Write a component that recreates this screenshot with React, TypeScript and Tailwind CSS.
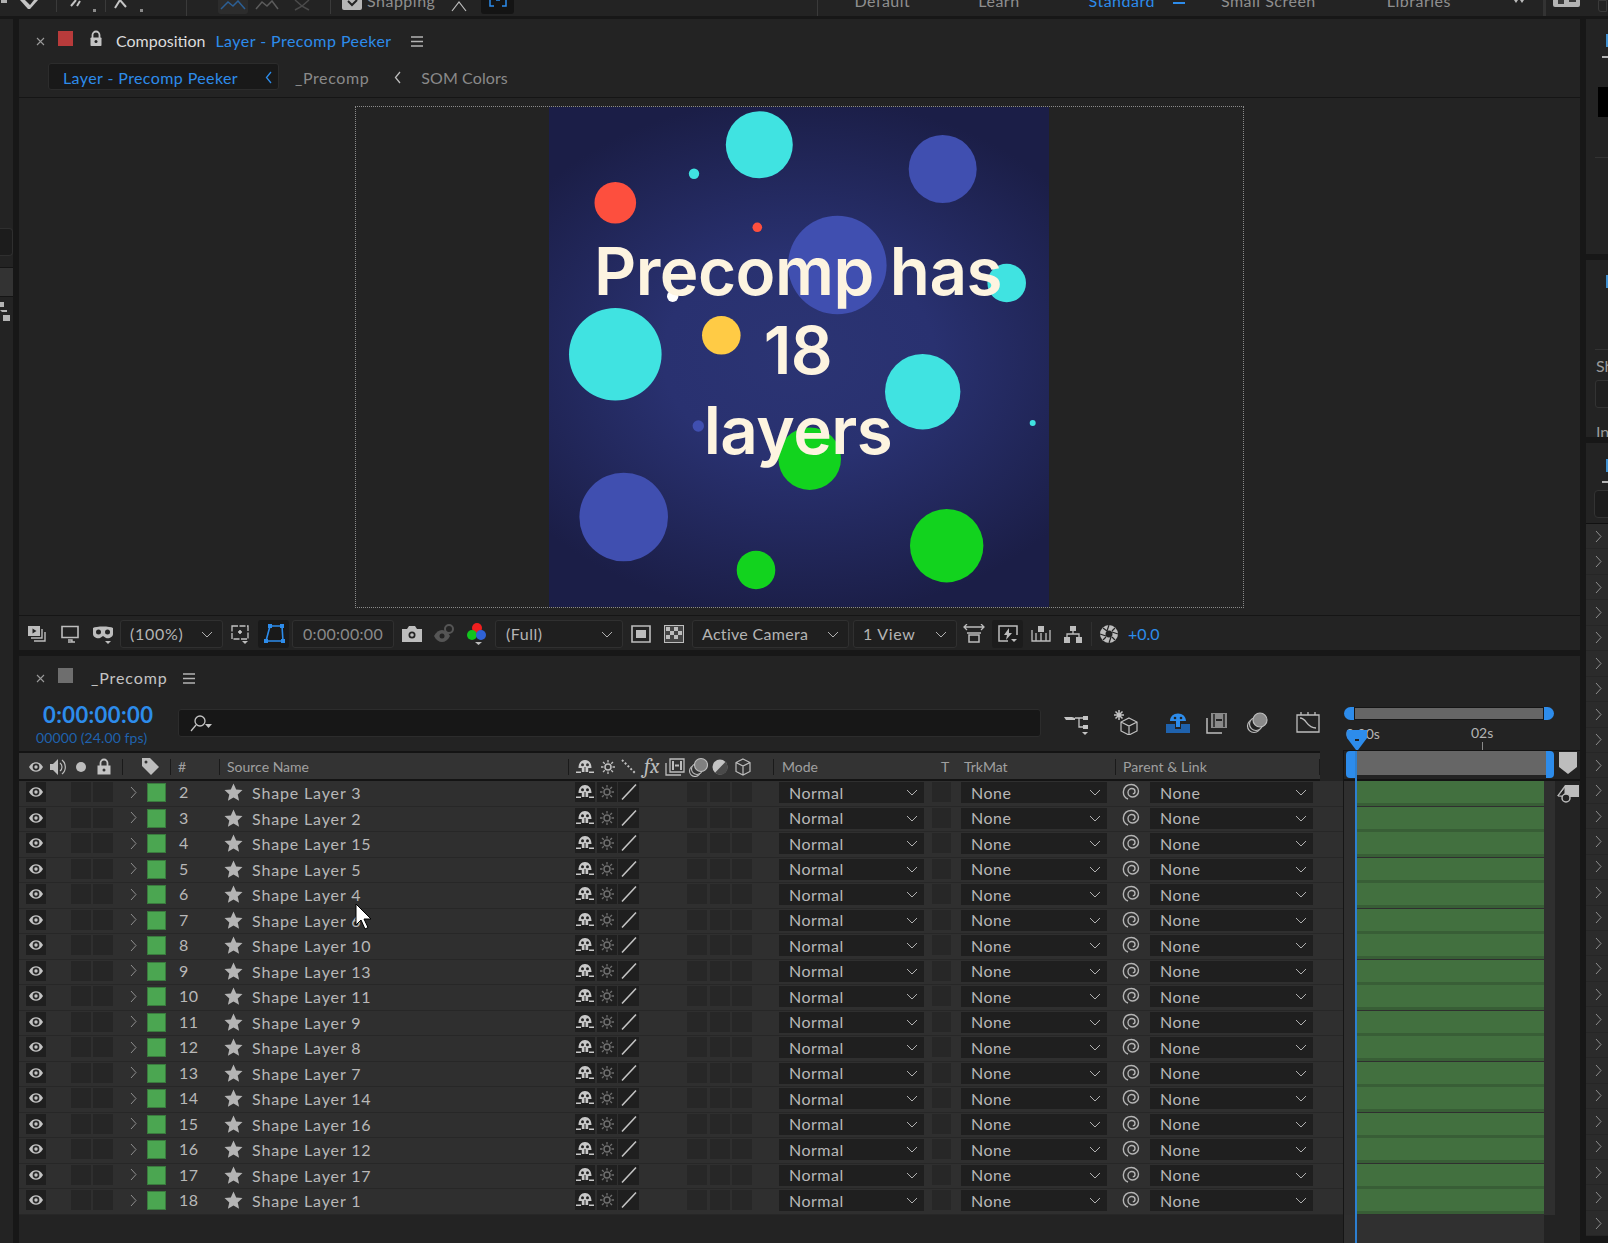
import React from "react";

const BLUE = "#2d8ceb";
const G = "#b4b4b4";

function S({ w, h, children, className = "" }: { w: number; h: number; children: React.ReactNode; className?: string }) {
  return (
    <svg width={w} height={h} viewBox={`0 0 ${w} ${h}`} className={"block shrink-0 " + className} fill="none">
      {children}
    </svg>
  );
}

function Eye({ c = "#c4c4c4" }: { c?: string }) {
  return (
    <S w={16} h={12}>
      <path d="M1 6C3 2.5 5.5 1.2 8 1.2S13 2.5 15 6c-2 3.5-4.500 4.800-7 4.800S3 9.500 1 6Z" fill={c} />
      <circle cx={8} cy={6} r={3.4} fill="#2a2a2a" />
      <circle cx={8} cy={6} r={1.7} fill={c} />
    </S>
  );
}
function Shy({ c = "#c8c8c8", bg = "#1f1f1f" }: { c?: string; bg?: string }) {
  return (
    <S w={18} h={16}>
      <path d="M2.500 9C2.500 4 5.200 1 9 1s6.500 3 6.500 8h-3.300v4H5.800V9Z" fill={c} />
      <circle cx={6.500} cy={5.800} r={1.500} fill={bg} />
      <circle cx={11.500} cy={5.800} r={1.500} fill={bg} />
      <rect x={8.500} y={8} width={1} height={5} fill={bg} />
      <rect x={0} y={12.500} width={5} height={1.500} fill={c} />
      <rect x={13} y={12.500} width={5} height={1.500} fill={c} />
    </S>
  );
}
function Sun({ c = "#6f6f6f" }: { c?: string }) {
  return (
    <S w={14} h={14}>
      <circle cx={7} cy={7} r={3} stroke={c} strokeWidth={1.500} />
      <path d="M7 0v2.500M7 11.500V14M0 7h2.500M11.500 7H14M2 2l1.800 1.800M10.200 10.200 12 12M12 2l-1.800 1.800M3.800 10.200 2 12" stroke={c} strokeWidth={1.300} />
    </S>
  );
}
function Chev({ c = "#b0b0b0" }: { c?: string }) {
  return (
    <S w={12} h={7}>
      <path d="M1 1l5 5 5-5" stroke={c} strokeWidth={1} />
    </S>
  );
}
function ChevR({ c = "#8e8e8e", h = 13 }: { c?: string; h?: number }) {
  return (
    <S w={7} h={h}>
      <path d={`M1 1l5 ${(h - 2) / 2}-5 ${(h - 2) / 2}`} stroke={c} strokeWidth={1} />
    </S>
  );
}
function ChevL({ c }: { c: string }) {
  return (
    <S w={7} h={13}>
      <path d="M6 1 1.500 6.500 6 12" stroke={c} strokeWidth={1.300} />
    </S>
  );
}
function Spiral() {
  return (
    <S w={18} h={18}>
      <path d="M6 16C2.500 14.500 1 11.500 1.500 8 2.200 4 5.500 1.500 9.500 1.500c3.800 0 7 3 7 6.500 0 3.500-2.700 6-5.700 6-2.600 0-4.800-2-4.800-4.500 0-2.300 1.800-4 3.800-4 1.800 0 3.200 1.300 3.200 3 0 1.400-1 2.300-2.200 2.300" stroke="#b4b4b4" strokeWidth={1.400} />
    </S>
  );
}
function Star() {
  return (
    <S w={19} h={18}>
      <path d="M9.500 0.500l2.700 6 6.300.6-4.800 4.300 1.400 6.300-5.600-3.300-5.600 3.300 1.400-6.300L.5 7.100l6.300-.6Z" fill={G} />
    </S>
  );
}
function Burger({ c = "#b4b4b4" }: { c?: string }) {
  return (
    <S w={12} h={11}>
      <path d="M0 1h12M0 5.500h12M0 10h12" stroke={c} strokeWidth={1.300} />
    </S>
  );
}
function X() {
  return (
    <S w={9} h={9}>
      <path d="M1 1l7 7M8 1L1 8" stroke="#9a9a9a" strokeWidth={1.100} />
    </S>
  );
}
function Lock() {
  return (
    <S w={14} h={17}>
      <path d="M3.500 8V5a3.500 3.500 0 0 1 7 0v3" stroke="#c4c4c4" strokeWidth={1.800} />
      <rect x={1.500} y={7.500} width={11} height={8.500} rx={0.800} fill="#c4c4c4" />
      <circle cx={7} cy={11.500} r={1.500} fill="#232323" />
    </S>
  );
}

function Select({ label, cls, textCls = "" }: { label: string; cls: string; textCls?: string }) {
  return (
    <div className={"flex h-[28px] items-center justify-between rounded-[3px] border border-[#303030] bg-[#1f1f1f] pl-[9px] pr-[9px] " + cls}>
      <span className={"text-[16px] tracking-[0.3px] text-[#b4b4b4] " + textCls}>{label}</span>
      <Chev />
    </div>
  );
}

function TabText({ c, children, cls = "" }: { c: string; children: React.ReactNode; cls?: string }) {
  return (
    <span className={"whitespace-nowrap text-[16px] " + cls} style={{ color: c }}>
      {children}
    </span>
  );
}

const circles: [number, number, number, string][] = [
  [210.3, 37.7, 33.5, "#40e3e1"],
  [393.7, 62, 34, "#404fb0"],
  [145, 66.7, 5.2, "#40e3e1"],
  [66.3, 95.7, 20.8, "#fd4f3e"],
  [208.3, 120.3, 4.8, "#fd4f3e"],
  [288.3, 158, 49.3, "#404fb0"],
  [457.7, 176, 19.3, "#40e3e1"],
  [123.7, 189.3, 5.7, "#ffffff"],
  [66.3, 247.3, 46.3, "#40e3e1"],
  [172.3, 228.3, 19.3, "#ffcb45"],
  [373.7, 284.7, 37.7, "#40e3e1"],
  [149.3, 319, 5.7, "#404fb0"],
  [483.7, 316, 3, "#40e3e1"],
  [260.7, 351.7, 31.3, "#12d31e"],
  [74.7, 410, 44.3, "#404fb0"],
  [397.7, 438.7, 36.7, "#12d31e"],
  [207, 463, 19.3, "#12d31e"],
];

function Artwork() {
  return (
    <div className="relative h-[500px] w-[500px] bg-[radial-gradient(340px_260px_at_center,#2b3473_0%,#293170_40%,#1b1e47_100%)]">
      <svg width={500} height={500} viewBox="0 0 500 500" className="absolute inset-0">
        {circles.map(([x, y, r, c], i) => (
          <circle key={i} cx={x} cy={y} r={r} fill={c} />
        ))}
      </svg>
      <div className="absolute inset-x-0 top-[125px] flex flex-col items-center pr-[2px] text-[65.5px] font-semibold leading-[79.3px] tracking-[-0.5px] text-[#fdf4e0] [font-family:Inter,sans-serif]">
        <span>Precomp has</span>
        <span>18</span>
        <span>layers</span>
      </div>
    </div>
  );
}

const names = [3, 2, 15, 5, 4, 6, 10, 13, 11, 9, 8, 7, 14, 16, 12, 17, 1];

function Cell({ cls, children }: { cls: string; children?: React.ReactNode }) {
  return <div className={"flex h-[20px] shrink-0 items-center justify-center bg-[#1f1f1f] " + cls}>{children}</div>;
}

function Row({ num, name }: { num: number; name: number }) {
  return (
    <div className="flex h-[25.5px] items-start border-b border-[#272727] bg-[#2f2f2f] pt-[1px]">
      <Cell cls="ml-[7px] w-[20px]">
        <Eye />
      </Cell>
      <Cell cls="ml-[25px] w-[20px] bg-[#262626]" />
      <Cell cls="ml-[2px] w-[20px] bg-[#262626]" />
      <div className="ml-[17px] flex h-[20px] w-[7px] shrink-0 items-center">
        <ChevR />
      </div>
      <div className="ml-[10px] mt-[1px] h-[19px] w-[19px] shrink-0 border border-[#3a7a3e] bg-[#4ba651]" />
      <span className="ml-[13px] w-[40px] shrink-0 text-[16px] leading-[20px] tracking-[0.4px] text-[#b8b8b8]">{num}</span>
      <div className="ml-[5px] flex h-[20px] shrink-0 items-center">
        <Star />
      </div>
      <span className="ml-[9px] w-[323px] shrink-0 whitespace-nowrap text-[16px] leading-[22px] tracking-[0.85px] text-[#b8b8b8]">
        Shape Layer {name}
      </span>
      <Cell cls="w-[20px]">
        <Shy />
      </Cell>
      <Cell cls="ml-[2px] w-[20px]">
        <Sun />
      </Cell>
      <Cell cls="ml-[1px] w-[21px]">
        <S w={18} h={18}>
          <path d="M2 16.500 16 1.500" stroke="#c4c4c4" strokeWidth={1.600} />
        </S>
      </Cell>
      <Cell cls="ml-[48px] w-[20px] bg-[#272727]" />
      <Cell cls="ml-[3px] w-[20px] bg-[#272727]" />
      <Cell cls="ml-[2px] w-[20px] bg-[#272727]" />
      <div className="ml-[27px] flex h-[21px] w-[145px] shrink-0 items-center justify-between bg-[#1f1f1f] pl-[10px] pr-[6px]">
        <span className="text-[16px] tracking-[0.5px] text-[#b8b8b8]">Normal</span>
        <Chev />
      </div>
      <Cell cls="ml-[8px] w-[19px] bg-[#272727]" />
      <div className="ml-[10px] flex h-[21px] w-[146px] shrink-0 items-center justify-between bg-[#1f1f1f] pl-[10px] pr-[6px]">
        <span className="text-[16px] tracking-[0.5px] text-[#b8b8b8]">None</span>
        <Chev />
      </div>
      <div className="ml-[15px] flex h-[20px] w-[18px] shrink-0 items-center justify-center">
        <Spiral />
      </div>
      <div className="ml-[10px] flex h-[21px] w-[163px] shrink-0 items-center justify-between bg-[#1f1f1f] pl-[10px] pr-[6px]">
        <span className="text-[16px] tracking-[0.5px] text-[#b8b8b8]">None</span>
        <Chev />
      </div>
    </div>
  );
}

function TrackRow() {
  return (
    <div className="flex h-[25.5px] bg-[#2f2f2f]">
      <div className="ml-[13px] h-[25px] w-[187px] border-b-[3px] border-[#385e36] bg-[#42703f]" />
    </div>
  );
}

function TopBar() {
  const T = "-mt-[7px] whitespace-nowrap text-[16px] leading-[16px] tracking-[0.5px] ";
  return (
    <div className="flex h-[16px] shrink-0 items-start overflow-hidden bg-[#232323] [font-family:Lato,sans-serif]">
      <div className="ml-[1px] h-[3px] w-[6px] bg-[#b0b0b0]" />
      <S w={18} h={10} className="ml-[13px]">
        <path d="M0 0h18L10 9H8Z" fill="#c4c4c4" />
        <path d="M5 0l5 5 4-5Z" fill="#232323" />
      </S>
      <div className="ml-[18px] h-[12px] w-[1px] bg-[#3a3a3a]" />
      <S w={28} h={14} className="ml-[12px]">
        <path d="M2 6l5-6M8 6l3-5" stroke="#c4c4c4" strokeWidth={2} />
        <path d="M24 9h3v3h-3Z" fill="#8a8a8a" />
      </S>
      <div className="ml-[8px] h-[12px] w-[1px] bg-[#3a3a3a]" />
      <S w={32} h={14} className="ml-[6px]">
        <path d="M3 8l5-8M8 0l6 7" stroke="#c4c4c4" strokeWidth={2} />
        <path d="M28 9h3v3h-3Z" fill="#8a8a8a" />
      </S>
      <div className="ml-[42px] h-[16px] w-[1px] bg-[#3a3a3a]" />
      <div className="ml-[31px] flex h-[14px] w-[30px] items-start justify-center rounded-b-[3px] bg-[#2c2c2c]">
        <S w={26} h={12}>
          <path d="M1 9l7-7 5 4 5-5 7 8" stroke="#2c5f94" strokeWidth={1.500} />
        </S>
      </div>
      <S w={24} h={12} className="ml-[7px]">
        <path d="M1 9l6-7 5 4 5-5 6 8" stroke="#5c5c5c" strokeWidth={1.500} />
      </S>
      <S w={20} h={12} className="ml-[13px]">
        <path d="M3 0l7 6 7-6M3 10l7-4 7 4" stroke="#4a4a4a" strokeWidth={1.500} />
      </S>
      <div className="ml-[18px] h-[14px] w-[1px] bg-[#3a3a3a]" />
      <div className="ml-[11px] flex h-[10px] w-[20px] items-start justify-center rounded-b-[2px] bg-[#b6b6b6]">
        <S w={12} h={8}>
          <path d="M2 1l4 4 5-5" stroke="#232323" strokeWidth={2} />
        </S>
      </div>
      <span className={T + "ml-[5px] text-[#8f8f8f]"}>Snapping</span>
      <S w={16} h={12} className="ml-[16px]">
        <path d="M1 11L8 2l7 9" stroke="#bcbcbc" strokeWidth={1.200} />
      </S>
      <div className="ml-[14px] flex h-[14px] w-[33px] items-start justify-center rounded-b-[3px] bg-[#141414]">
        <S w={20} h={8}>
          <path d="M2 0v6h4M14 6h4V0M8 0h4" stroke={BLUE} strokeWidth={1.500} />
        </S>
      </div>
      <div className="ml-[303px] h-[16px] w-[1px] bg-[#3a3a3a]" />
      <span className={T + "ml-[36px] text-[#8f8f8f]"}>Default</span>
      <span className={T + "ml-[68px] text-[#8f8f8f]"}>Learn</span>
      <span className={T + "ml-[69px] text-[#2d8ceb]"}>Standard</span>
      <div className="ml-[18px] mt-[2px] h-[2px] w-[12px] bg-[#2d8ceb]" />
      <span className={T + "ml-[36px] text-[#8f8f8f]"}>Small Screen</span>
      <span className={T + "ml-[71px] text-[#8f8f8f]"}>Libraries</span>
      <div className="ml-[63px] flex gap-[2px]">
        <S w={4} h={4}>
          <path d="M0 0l2 3 2-3" fill="#bbbbbb" />
        </S>
        <S w={4} h={4}>
          <path d="M0 0l2 3 2-3" fill="#bbbbbb" />
        </S>
      </div>
      <div className="ml-[19px] h-[16px] w-[3px] bg-[#333333]" />
      <div className="ml-[7px] flex h-[7px] w-[27px] items-start justify-around rounded-b-[2px] bg-[#b4b4b4] px-[2px]">
        <div className="h-[4px] w-[6px] bg-[#3a3a3a]" />
        <div className="h-[2px] w-[7px] bg-[#3a3a3a]" />
      </div>
      <div className="ml-[18px] h-[12px] w-[9px] rounded-bl-[3px] border border-[#3a3a3a]" />
    </div>
  );
}

function LeftPanel() {
  return (
    <div className="w-[13px] shrink-0 bg-[#232323]">
      <div className="mt-[209px] h-[28px] rounded-r-[4px] border border-l-0 border-[#2f2f2f] bg-[#1c1c1c]" />
      <div className="mt-[11px] h-[30px] border-y border-[#151515] bg-[#333333]" />
      <S w={13} h={20} className="mt-[4px]">
        <path d="M0 1h4v5H0ZM0 9h7v2H2M3 14h7v6H3Z" fill="#b4b4b4" />
      </S>
    </div>
  );
}

function RightPanel() {
  return (
    <div className="flex w-[22px] shrink-0 flex-col gap-[6px] overflow-hidden">
      <div className="h-[235px] shrink-0 bg-[#232323]">
        <div className="ml-[20px] mt-[15px] h-[13px] w-[2px] bg-[#3f8fd0]" />
        <div className="ml-[16px] mt-[9px] h-[2px] w-[6px] bg-[#b4b4b4]" />
        <div className="ml-[12px] mt-[29px] h-[30px] w-[10px] bg-black" />
        <div className="ml-[9px] mt-[40px] h-[1px] w-[13px] bg-[#333333]" />
      </div>
      <div className="h-[177px] shrink-0 overflow-hidden bg-[#232323]">
        <div className="ml-[20px] mt-[15px] h-[13px] w-[2px] bg-[#3f8fd0]" />
        <div className="ml-[9px] mt-[61px] h-[1px] w-[13px] bg-[#333333]" />
        <div className="ml-[10px] mt-[6px] whitespace-nowrap text-[16px] leading-[20px] text-[#9a9a9a]">Sh</div>
        <div className="ml-[9px] mt-[4px] h-[28px] w-[20px] rounded-[3px] border border-[#333333] bg-[#1f1f1f]" />
        <div className="ml-[10px] mt-[14px] whitespace-nowrap text-[16px] leading-[20px] text-[#9a9a9a]">In</div>
      </div>
      <div className="flex-1 bg-[#232323]">
        <div className="ml-[20px] mt-[16px] h-[13px] w-[2px] bg-[#3f8fd0]" />
        <div className="ml-[16px] mt-[9px] h-[2px] w-[6px] bg-[#b4b4b4]" />
        <div className="ml-[8px] mt-[7px] h-[28px] w-[20px] rounded-[4px] border border-[#333333] bg-[#1c1c1c]" />
        <div className="mt-[5px] h-[1px] bg-[#111111]" />
        {Array.from({ length: 28 }).map((_, i) => (
          <div key={i} className="flex h-[25.45px] items-center border-b border-[#262626] bg-[#2b2b2b] pl-[9px]">
            <ChevR />
          </div>
        ))}
      </div>
    </div>
  );
}

function CompPanel() {
  return (
    <div className="flex h-[631px] shrink-0 flex-col bg-[#232323]">
      <div className="flex h-[44px] shrink-0 items-center">
        <div className="ml-[17px]">
          <X />
        </div>
        <div className="ml-[13px] -mt-[6px] h-[15px] w-[15px] bg-[#b83b3b]" />
        <div className="ml-[16px] -mt-[6px]">
          <Lock />
        </div>
        <TabText c="#dcdcdc" cls="ml-[13px]">
          Composition
        </TabText>
        <TabText c={BLUE} cls="ml-[10px] tracking-[0.45px]">
          Layer - Precomp Peeker
        </TabText>
        <div className="ml-[19px]">
          <Burger />
        </div>
      </div>
      <div className="flex h-[35px] shrink-0 items-start border-b border-[#151515]">
        <div className="ml-[29px] flex h-[27px] w-[231px] items-center rounded-[3px] border border-[#2c2c2c] bg-[#191919] pl-[14px] pt-[2px]">
          <TabText c={BLUE} cls="tracking-[0.4px]">
            Layer - Precomp Peeker
          </TabText>
          <div className="ml-[27px]">
            <ChevL c={BLUE} />
          </div>
        </div>
        <div className="flex h-[27px] items-center pt-[2px]">
          <TabText c="#8a8a8a" cls="ml-[16px] tracking-[0.6px]">
            _Precomp
          </TabText>
          <div className="ml-[25px]">
            <ChevL c="#bbbbbb" />
          </div>
          <TabText c="#8a8a8a" cls="ml-[20px] tracking-[0.1px]">
            SOM Colors
          </TabText>
        </div>
      </div>
      <div className="relative flex h-[517px] shrink-0 justify-center pt-[8px]">
        <div className="ml-[-1px] flex h-[502px] w-[889px] justify-center border border-dotted border-[#8a8a8a]">
          <Artwork />
        </div>
      </div>
      <div className="flex h-[35px] shrink-0 items-center border-t border-[#151515] bg-[#232323] pt-[2px]">
        <S w={20} h={20} className="ml-[8px]">
          <path d="M1 2h12v10H1Z" fill="#bdbdbd" />
          <path d="M5.500 4.500v5l4-2.500Z" fill="#232323" />
          <path d="M15 5v9H4M18 8v9H7" stroke="#bdbdbd" strokeWidth={1.400} />
        </S>
        <S w={20} h={20} className="ml-[13px]">
          <path d="M2 2.500h16v11H2Z" stroke="#bdbdbd" strokeWidth={1.600} />
          <path d="M8 16h4v2h3M8 18h4" stroke="#bdbdbd" strokeWidth={1.400} />
        </S>
        <S w={22} h={22} className="ml-[12px]">
          <path d="M1 5c3-2 17-2 20 0v6c0 3-4 5-7 4l-3-2-3 2c-3 1-7-1-7-4Z" fill="#bdbdbd" />
          <circle cx={6.500} cy={9} r={2.500} fill="#232323" />
          <circle cx={15.500} cy={9} r={2.500} fill="#232323" />
          <path d="M13 18h6l-3 3Z" fill="#bdbdbd" />
        </S>
        <Select label="(100%)" cls="ml-[6px] w-[103px]" textCls="tracking-[0.7px]" />
        <S w={22} h={22} className="ml-[6px]">
          <path d="M3 3h16v13H3Z" stroke="#c4c4c4" strokeWidth={1.300} strokeDasharray="6 1.500" />
          <path d="M11 7v4M9 9h4" stroke="#d0d0d0" strokeWidth={1.500} />
          <path d="M13 18h6l-3 3Z" fill="#bdbdbd" />
        </S>
        <div className="ml-[7px] flex h-[28px] w-[31px] items-center justify-center rounded-[3px] bg-[#191919]">
          <S w={22} h={22}>
            <path d="M7 3h12l1 15H3Z" stroke={BLUE} strokeWidth={1.600} />
            <path d="M5 1h4v4H5ZM17 1h4v4h-4ZM1 16h4v4H1ZM18 16h4v4h-4Z" fill={BLUE} />
          </S>
        </div>
        <div className="ml-[3px] flex h-[28px] w-[102px] items-center justify-center rounded-[3px] border border-[#303030] bg-[#1f1f1f] text-[16px] tracking-[0.3px] text-[#8a8a8a]">
          0:00:00:00
        </div>
        <S w={22} h={18} className="ml-[7px]">
          <path d="M1 4h5l2-3h6l2 3h5v13H1Z" fill="#bdbdbd" />
          <circle cx={11} cy={10} r={3.500} fill="#232323" />
          <circle cx={11} cy={10} r={1.800} fill="#bdbdbd" />
        </S>
        <S w={22} h={22} className="ml-[10px]">
          <path d="M1 13c2-4 5-6 8-6s6 2 8 6c-2 4-5 6-8 6s-6-2-8-6Z" fill="#555555" />
          <circle cx={9} cy={13} r={2.500} fill="#232323" />
          <circle cx={16} cy={6} r={4} stroke="#555555" strokeWidth={2} />
        </S>
        <S w={22} h={24} className="ml-[11px]">
          <circle cx={11} cy={6} r={5} fill="#f01f1f" />
          <circle cx={6} cy={13} r={5} fill="#12c41e" />
          <circle cx={15} cy={13} r={5} fill="#2f62d6" />
          <path d="M9 20h7l-3.500 3Z" fill="#bdbdbd" />
        </S>
        <Select label="(Full)" cls="ml-[7px] w-[128px] pl-[10px]" textCls="tracking-[0.5px]" />
        <S w={20} h={18} className="ml-[8px]">
          <path d="M1 1h18v16H1Z" stroke="#bdbdbd" strokeWidth={1.600} />
          <rect x={5} y={5} width={10} height={8} fill="#bdbdbd" />
        </S>
        <S w={20} h={18} className="ml-[13px]">
          <rect x={0.500} y={0.500} width={19} height={17} fill="#454545" stroke="#bdbdbd" />
          <path d="M2 2h4v4H2ZM10 2h4v4h-4ZM6 6h4v4H6ZM14 6h4v4h-4ZM2 10h4v4H2ZM10 10h4v4h-4Z" fill="#bdbdbd" />
        </S>
        <Select label="Active Camera" cls="ml-[8px] w-[157px]" />
        <Select label="1 View" cls="ml-[4px] w-[104px]" textCls="tracking-[0.7px]" />
        <S w={22} h={20} className="ml-[6px]">
          <path d="M1 3h20M4 0 1 3l3 3M18 0l3 3-3 3" stroke="#bdbdbd" strokeWidth={1.300} />
          <path d="M6 11h10v7H6Z" stroke="#bdbdbd" strokeWidth={1.500} />
          <path d="M4 9h14" stroke="#bdbdbd" strokeWidth={1.500} />
        </S>
        <div className="ml-[7px] flex h-[28px] w-[31px] items-center justify-center rounded-[3px] bg-[#1c1c1c]">
          <S w={20} h={20}>
            <path d="M10 17H1V2h18v9" stroke="#bdbdbd" strokeWidth={1.500} />
            <path d="M11 4 6 11h3l-1 5 6-7h-3Z" fill="#bdbdbd" />
            <path d="M13 15h6l-3 3Z" fill="#bdbdbd" />
          </S>
        </div>
        <S w={20} h={18} className="ml-[8px]">
          <path d="M1 5v11h18V5M5 8v8M10 8v8M15 8v8" stroke="#bdbdbd" strokeWidth={1.300} />
          <rect x={7} y={1} width={6} height={6} fill="#bdbdbd" />
        </S>
        <S w={20} h={18} className="ml-[12px]">
          <path d="M7 1h6v5H7ZM1 12h6v6H1ZM13 12h6v6h-6Z" fill="#bdbdbd" />
          <path d="M10 6v3M4 12V9h12v3" stroke="#bdbdbd" strokeWidth={1.300} />
        </S>
        <div className="ml-[8px] h-[24px] w-[1px] bg-[#303030]" />
        <S w={20} h={20} className="ml-[7px]">
          <circle cx={10} cy={10} r={9} fill="#bdbdbd" />
          <circle cx={10} cy={10} r={3.500} fill="#232323" />
          <path d="M10 1 8 7M19 10l-6-2M10 19l2-6M1 10l6 2M4 4l4 3M16 4l-3 3M16 16l-3-3M4 16l3-3" stroke="#232323" strokeWidth={1.200} />
        </S>
        <span className="ml-[9px] text-[16px] text-[#2d8ceb]">+0.0</span>
      </div>
    </div>
  );
}

function HeaderIcons() {
  const H = "text-[14px] text-[#a0a0a0] ";
  return (
    <div className="flex h-full items-center">
      <div className="ml-[9px]">
        <Eye c="#c0c0c0" />
      </div>
      <S w={18} h={18} className="ml-[5px]">
        <path d="M1 6h3l5-5v16l-5-5H1Z" fill="#bdbdbd" />
        <path d="M11 5a5 5 0 0 1 0 8M13 2a9 9 0 0 1 0 14" stroke="#bdbdbd" strokeWidth={1.200} />
      </S>
      <S w={10} h={10} className="ml-[9px]">
        <circle cx={5} cy={5} r={5} fill="#bdbdbd" />
      </S>
      <S w={14} h={17} className="ml-[11px]">
        <path d="M3.500 8V5a3.500 3.500 0 0 1 7 0v3" stroke="#c4c4c4" strokeWidth={1.800} />
        <rect x={0.500} y={7.500} width={13} height={9} fill="#c4c4c4" />
        <circle cx={7} cy={12} r={1.500} fill="#333333" />
      </S>
      <div className="ml-[11px] h-[16px] w-[1px] bg-[#1a1a1a]" />
      <S w={19} h={19} className="ml-[18px]">
        <path d="M1 1h8l9 9-8 8-9-9Z" fill="#bdbdbd" />
        <circle cx={5} cy={5} r={1.500} fill="#333333" />
      </S>
      <div className="ml-[10px] h-[16px] w-[1px] bg-[#1a1a1a]" />
      <span className={H + "ml-[7px] w-[41px]"}>#</span>
      <div className="h-[16px] w-[1px] bg-[#1a1a1a]" />
      <span className={H + "ml-[7px] w-[341px]"}>Source Name</span>
      <div className="h-[16px] w-[1px] bg-[#1a1a1a]" />
      <div className="ml-[7px]">
        <Shy bg="#333333" />
      </div>
      <div className="ml-[7px]">
        <Sun c="#c0c0c0" />
      </div>
      <S w={15} h={15} className="ml-[6px]">
        <path d="M1 1l13 13" stroke="#bdbdbd" strokeWidth={2} strokeDasharray="2 2" />
      </S>
      <span className="ml-[8px] w-[16px] font-serif text-[21px] italic leading-none text-[#bdbdbd]">fx</span>
      <S w={20} h={18} className="ml-[5px]">
        <path d="M5 1h14v13H5ZM1 5v12h15" stroke="#bdbdbd" strokeWidth={1.300} />
        <path d="M8 3v9M16 3v9M10 7.500h4" stroke="#bdbdbd" strokeWidth={2} />
      </S>
      <S w={20} h={20} className="ml-[3px]">
        <circle cx={7} cy={14} r={5.500} stroke="#bdbdbd" strokeWidth={1.100} />
        <circle cx={9} cy={12} r={5.500} fill="#333333" stroke="#bdbdbd" strokeWidth={1.100} />
        <circle cx={13} cy={8} r={6.500} fill="#808080" stroke="#bdbdbd" strokeWidth={1.100} />
      </S>
      <S w={16} h={16} className="ml-[4px]">
        <circle cx={8} cy={8} r={7.500} fill="#c4c4c4" />
        <path d="M13.500 2.800A7.500 7.500 0 0 1 3 13.700Z" fill="#4a4a4a" />
      </S>
      <S w={18} h={18} className="ml-[6px]">
        <path d="M9 1l7 3.500v9L9 17l-7-3.500v-9ZM2 4.500 9 8l7-3.500M9 8v9" stroke="#bdbdbd" strokeWidth={1.200} />
      </S>
      <div className="ml-[21px] h-[16px] w-[1px] bg-[#1a1a1a]" />
      <span className={H + "ml-[8px] w-[159px]"}>Mode</span>
      <span className={H + "w-[23px]"}>T</span>
      <span className={H + "w-[151px]"}>TrkMat</span>
      <div className="h-[16px] w-[1px] bg-[#1a1a1a]" />
      <span className={H + "ml-[7px] w-[196px] tracking-[0.1px]"}>Parent &amp; Link</span>
      <div className="h-[16px] w-[1px] bg-[#1a1a1a]" />
    </div>
  );
}

function Timeline() {
  return (
    <div className="relative flex min-h-0 flex-1 bg-[#232323]">
      <div className="flex w-[1324px] shrink-0 flex-col">
        <div className="flex h-[39px] shrink-0 items-center pt-[5px]">
          <div className="ml-[17px]">
            <X />
          </div>
          <div className="ml-[13px] -mt-[6px] h-[15px] w-[15px] bg-[#6e6e6e]" />
          <span className="ml-[18px] text-[16px] tracking-[0.9px] text-[#c4c4c4]">_Precomp</span>
          <div className="ml-[15px]">
            <Burger />
          </div>
        </div>
        <div className="flex h-[56px] shrink-0 items-start">
          <div className="w-[159px] pl-[17px]">
            <div className="mt-[7px] pl-[7px] text-[22px] font-bold leading-[26px] tracking-[0.4px] text-[#2d8ceb]">0:00:00:00</div>
            <div className="mt-[1px] whitespace-nowrap text-[14px] leading-[17px] tracking-[0.1px] text-[#1f62ad]">00000 (24.00 fps)</div>
          </div>
          <div className="mt-[14px] flex h-[28px] w-[863px] items-center rounded-[3px] border border-[#2c2c2c] bg-[#171717] pl-[10px]">
            <S w={24} h={18}>
              <circle cx={11} cy={7} r={5} stroke="#c4c4c4" strokeWidth={1.300} />
              <path d="M7 11l-5 6" stroke="#c4c4c4" strokeWidth={1.300} />
              <path d="M16 10h7l-3.500 4Z" fill="#c4c4c4" />
            </S>
          </div>
          <S w={26} h={22} className="ml-[22px] mt-[18px]">
            <path d="M1 4h8l3 1v2H3Z" fill="#c4c4c4" />
            <path d="M12 5h10M16 5v9h6" stroke="#c4c4c4" strokeWidth={1.300} />
            <path d="M20 3h5v4h-5ZM20 12h5v4h-5Z" fill="#c4c4c4" />
            <path d="M19 19h6l-3 3Z" fill="#c4c4c4" />
          </S>
          <S w={26} h={26} className="ml-[23px] mt-[14px]">
            <path d="M7 1v10M2 6h10M3.500 2.500l7 7M10.500 2.500l-7 7" stroke="#c4c4c4" strokeWidth={1.500} />
            <path d="M17 9l8 4v9l-8 4-8-4v-9ZM9 13l8 4 8-4M17 17v9" stroke="#c4c4c4" strokeWidth={1.200} />
          </S>
          <S w={26} h={22} className="ml-[27px] mt-[17px]">
            <path d="M5 9C5 4.500 8.500 1.500 13 1.500S21 4.500 21 9h-6v6h-4V9Z" fill="#2d8ceb" />
            <circle cx={10} cy={6} r={1.300} fill="#232323" />
            <circle cx={16} cy={6} r={1.300} fill="#232323" />
            <path d="M1 12h9v5h6v-5h9v9H1Z" fill="#1f62ad" />
          </S>
          <S w={22} h={22} className="ml-[15px] mt-[17px]">
            <path d="M5 1h16v15H5Z" fill="#8a8a8a" />
            <path d="M1 6v15h15" stroke="#bdbdbd" strokeWidth={1.500} />
            <path d="M8 2v13M18 2v13" stroke="#232323" strokeWidth={1.500} />
            <path d="M10 8h6" stroke="#232323" strokeWidth={2} />
          </S>
          <S w={22} h={22} className="ml-[18px] mt-[17px]">
            <circle cx={8} cy={14} r={6.500} stroke="#bdbdbd" strokeWidth={1.200} />
            <circle cx={10} cy={12} r={6.500} fill="#232323" stroke="#bdbdbd" strokeWidth={1.200} />
            <circle cx={14} cy={8} r={7} fill="#8a8a8a" stroke="#bdbdbd" strokeWidth={1.200} />
          </S>
          <S w={24} h={22} className="ml-[28px] mt-[16px]">
            <path d="M1 4h22v17H1Z" stroke="#bdbdbd" strokeWidth={1.300} />
            <path d="M4 7c7 0 6 10 16 10M5 1v3M12 1v3M19 1v3" stroke="#bdbdbd" strokeWidth={1.300} />
          </S>
        </div>
        <div className="mr-[23px] h-[30px] shrink-0 border-y-2 border-[#141414] bg-[#333333] pt-[1px]">
          <HeaderIcons />
        </div>
        {names.map((n, i) => (
          <Row key={i} num={i + 2} name={n} />
        ))}
      </div>
      <div className="flex w-[237px] shrink-0 flex-col">
        <div className="h-[51px] shrink-0" />
        <div className="ml-[1px] flex h-[13px] w-[210px] shrink-0">
          <div className="h-full w-[10px] rounded-l-full bg-[#2d8ceb]" />
          <div className="h-full flex-1 border border-[#151515] bg-[#666666]" />
          <div className="h-full w-[10px] rounded-r-full bg-[#2d8ceb]" />
        </div>
        <div className="flex h-[31px] shrink-0 items-start border-b border-[#141414]">
          <span className="ml-[3px] mt-[5px] w-[125px] text-[14px] leading-[17px] text-[#b4b4b4]">0:00s</span>
          <div className="flex flex-col items-center">
            <span className="mt-[4px] text-[14px] leading-[17px] text-[#b4b4b4]">02s</span>
            <div className="mt-[1px] h-[8px] w-[1px] bg-[#8a8a8a]" />
          </div>
        </div>
        <div className="flex h-[30px] shrink-0 items-start border-b-2 border-l border-[#141414]">
          <div className="flex h-[27px] w-[210px] shrink-0 pl-[2px]">
            <div className="h-full w-[9px] rounded-l-[4px] bg-[#2d8ceb]" />
            <div className="h-[24px] flex-1 bg-[#666666]" />
            <div className="h-full w-[8px] rounded-r-[4px] bg-[#2d8ceb]" />
          </div>
          <S w={18} h={23} className="ml-[5px] mt-[1px]">
            <path d="M0 0h18v15l-9 7-9-7Z" fill="#bdbdbd" />
          </S>
        </div>
        <div className="flex min-h-0 flex-1 flex-col border-l border-[#151515]">
          <div className="w-[211px] shrink-0">
            {names.map((_, i) => (
              <TrackRow key={i} />
            ))}
          </div>
          <div className="w-[200px] flex-1 bg-[#303030]" />
        </div>
      </div>
      <div className="absolute bottom-0 left-[1336px] top-[95px] w-[2px] bg-[#2d7fd0]" />
      <svg width={20} height={21} viewBox="0 0 20 21" className="absolute left-[1328px] top-[74px]">
        <path d="M0 0h20v8l-9 12h-2L0 8Z" fill="#2d8ceb" />
        <path d="M8 10h4" stroke="#232323" strokeWidth={2} />
      </svg>
      <svg width={22} height={20} viewBox="0 0 22 20" className="absolute left-[1538px] top-[128px]">
        <path d="M0 12 8 1h14v12H9" fill="#bdbdbd" />
        <path d="M1 12 8 3v9Z" fill="#232323" stroke="#bdbdbd" />
        <circle cx={9} cy={14} r={4} fill="#232323" stroke="#bdbdbd" strokeWidth={1.500} />
      </svg>
    </div>
  );
}

export default function App() {
  return (
    <div className="relative flex h-[1243px] w-[1608px] flex-col overflow-hidden bg-[#171717] text-[#b4b4b4] [font-family:Lato,sans-serif]">
      <TopBar />
      <div className="flex min-h-0 flex-1 pt-[3px]">
        <LeftPanel />
        <div className="ml-[6px] flex w-[1561px] shrink-0 flex-col gap-[6px]">
          <CompPanel />
          <Timeline />
        </div>
        <div className="ml-[6px]">
          <RightPanel />
        </div>
      </div>
      <svg width={18} height={27} viewBox="0 0 18 27" className="absolute left-[355px] top-[903px]">
        <path d="M1 1v21l5-5 4 9 3-1.500-4-8.500h7Z" fill="#ffffff" stroke="#000000" />
      </svg>
    </div>
  );
}
